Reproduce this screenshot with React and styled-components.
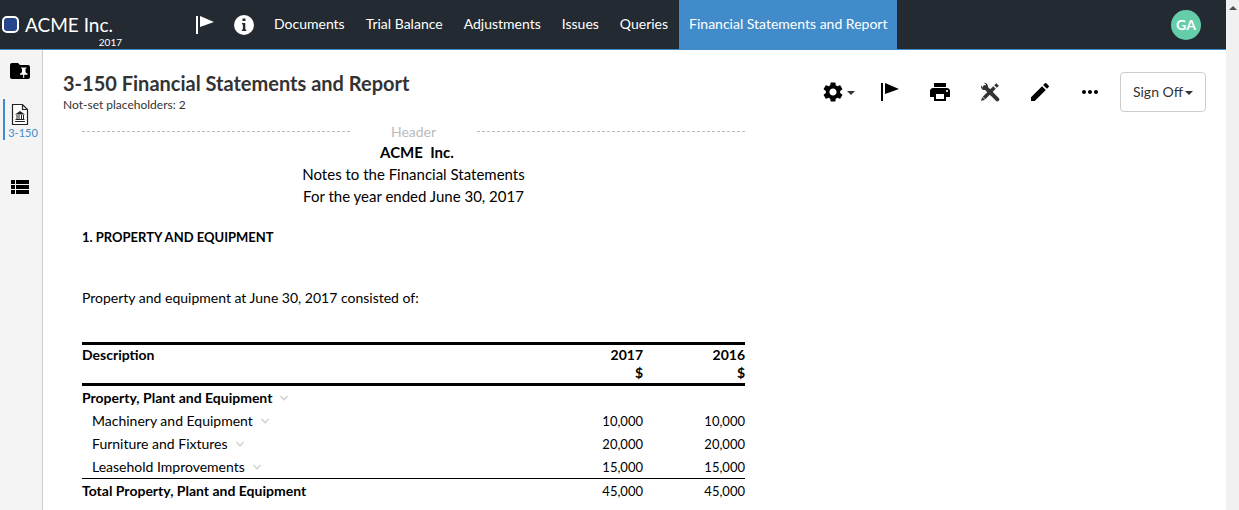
import React from "react";
import styled, { createGlobalStyle } from "styled-components";
import { MdSettings, MdPrint, MdEdit, MdMoreHoriz, MdViewList } from "react-icons/md";

const Global = createGlobalStyle`
  * { box-sizing: border-box; }
  body { margin: 0; background: #fff; color: #333; font-family: Lato, "Liberation Sans", sans-serif; font-size: 14px; }
  button { font: inherit; color: inherit; background: none; border: 0; padding: 0; cursor: pointer; }
  a { color: inherit; text-decoration: none; }
  svg { display: block; flex: none; }
`;

const Page = styled.div`
  display: grid;
  grid-template-columns: minmax(0, 1fr) 13px;
  height: 100vh;
  overflow: hidden;
`;
const Shell = styled.div`
  display: flex;
  flex-direction: column;
  min-width: 0;
`;
const ScrollTrack = styled.div`
  display: flex;
  justify-content: center;
  padding-top: 6px;
  background: #f1f1f1;
`;
const TopBar = styled.header`
  display: flex;
  flex: none;
  height: 50px;
  background: #232a31;
  border-bottom: 1px solid #428bca;
  color: #fff;
`;
const Brand = styled.a`
  display: flex;
  flex-direction: column;
  width: 122px;
  padding: 13px 0 0 2px;
`;
const BrandName = styled.span`
  display: flex;
  align-items: center;
  gap: 6px;
  font-size: 19px;
  line-height: 23px;
`;
const Logo = styled.span`
  width: 17px;
  height: 17px;
  border: 2px solid #fff;
  border-radius: 5px;
  background: #27468b;
`;
const BrandYear = styled.span`
  align-self: flex-end;
  font-size: 10px;
  line-height: 12px;
`;
const TopIcons = styled.div`
  display: flex;
  align-items: center;
  gap: 19px;
  padding-left: 73px;
`;
const NavLinks = styled.nav`
  display: flex;
  gap: 1px;
  padding-left: 10px;
`;
const NavLink = styled.a`
  display: flex;
  align-items: center;
  height: 49px;
  padding: 0 10px 2px;
  white-space: nowrap;
  background: ${(p) => (p.$active ? "#428bca" : "transparent")};
`;
const Avatar = styled.button`
  align-self: center;
  width: 30px;
  height: 30px;
  margin: 0 25px 0 auto;
  border-radius: 50%;
  background: #66cdaa;
  color: #fff;
  font-size: 14px;
  font-weight: 700;
`;
const Body = styled.div`
  display: flex;
  flex: 1;
  min-height: 0;
`;
const SideBar = styled.nav`
  display: flex;
  flex: none;
  flex-direction: column;
  width: 43px;
  padding: 9px 0 0 3px;
  background: #f4f4f4;
  border-right: 1px solid #ccc;
`;
const SideLink = styled.a`
  display: flex;
  flex-direction: column;
  align-items: center;
  padding: 4px 7px 0 0;
  height: ${(p) => (p.$active ? "41px" : "40px")};
  border-left: 2px solid ${(p) => (p.$active ? "#428bca" : "transparent")};
  margin-bottom: ${(p) => (p.$active ? "31px" : "0")};
  color: #000;
`;
const SideLabel = styled.span`
  margin-right: -6px;
  color: #428bca;
  font-size: 11px;
  line-height: 13px;
  white-space: nowrap;
`;
const Main = styled.main`
  flex: 1;
  min-width: 0;
`;
const PageHead = styled.div`
  display: flex;
  justify-content: space-between;
  padding: 22px 20px 0;
`;
const Title = styled.h1`
  margin: 0;
  font-size: 20px;
  line-height: 23px;
  font-weight: 700;
`;
const SubTitle = styled.p`
  margin: 0;
  font-size: 12px;
  line-height: 19px;
`;
const Tools = styled.div`
  display: flex;
  align-items: center;
  height: 40px;
`;
const ToolButton = styled.button`
  display: flex;
  align-items: center;
  justify-content: center;
  width: ${(p) => (p.$wide ? "55px" : "50px")};
  height: 40px;
  gap: 2px;
  color: #000;
`;
const SignOff = styled.button`
  display: flex;
  align-items: center;
  justify-content: center;
  gap: 2px;
  width: 86px;
  height: 40px;
  padding-bottom: 1px;
  margin-left: 5px;
  border: 1px solid #ccc;
  border-radius: 4px;
  color: #333;
  font-size: 14px;
`;
const Caret = styled.span`
  margin-top: 2px;
  border: 4px solid transparent;
  border-top-color: #333;
  border-bottom: 0;
`;
const ScrollArrow = styled.span`
  width: 8px;
  height: 4px;
  border: 4px solid transparent;
  border-top: 0;
  border-bottom-color: #505050;
`;
const Doc = styled.article`
  width: 663px;
  max-width: calc(100% - 58px);
  margin: 7px 0 0 39px;
  color: #000;
`;
const HeaderMark = styled.div`
  display: flex;
  align-items: center;
  gap: 41px;
  height: 20px;
  color: #bbb;
  font-size: 14px;
`;
const Dash = styled.span`
  flex: 1 1 0;
  border-top: 1px dashed #bbb;
`;
const Heading = styled.div`
  text-align: center;
  font-size: 15px;
  line-height: 22px;
  font-weight: ${(p) => (p.$bold ? 700 : 400)};
  white-space: pre;
`;
const NoteTitle = styled.h2`
  margin: 20px 0 0;
  font-size: 13px;
  line-height: 20px;
  font-weight: 700;
`;
const NoteText = styled.p`
  margin: 41px 0 34px;
  font-size: 14px;
  line-height: 20px;
`;
const Table = styled.table`
  width: 100%;
  border-collapse: collapse;
  font-size: 14px;
`;
const HeadCell = styled.th`
  width: ${(p) => p.$width || "auto"};
  height: 41px;
  padding: 1px 0 0;
  border-top: 3px solid #000;
  border-bottom: 3px solid #000;
  line-height: 18px;
  text-align: ${(p) => (p.$num ? "right" : "left")};
  vertical-align: top;
`;
const BodyRow = styled.tr`
  height: 23px;
  border-top: ${(p) => (p.$total ? "1px solid #000" : "0")};
`;
const LabelCell = styled.th`
  padding: 0 0 0 ${(p) => (p.$indent ? "10px" : "0")};
  font-weight: ${(p) => (p.$indent ? 400 : 700)};
  text-align: left;
  line-height: 23px;
`;
const NumCell = styled.td`
  padding: 0;
  font-size: 13px;
  text-align: right;
`;
const RowLabel = styled.span`
  display: flex;
  align-items: center;
  gap: 8px;
`;

const FlagIcon = () => (
  <svg width="20" height="20" viewBox="0 0 20 20" fill="currentColor" aria-hidden="true">
    <path d="M1 1h2v18H1zM5 1l14 6L5 12z" />
  </svg>
);
const InfoIcon = () => (
  <svg width="20" height="20" viewBox="0 0 20 20" aria-hidden="true">
    <circle cx="10" cy="10" r="10" fill="#fff" />
    <path d="M8.500 3.500h3v2.500h-3zM8 8h3.300v6.500h1V16H7.900v-1.500h1V9.500H8z" fill="#232a31" />
  </svg>
);
const FolderPinIcon = () => (
  <svg width="20" height="16" viewBox="0 0 20 16" aria-hidden="true">
    <path d="M2 0h6l2 2h8a2 2 0 0 1 2 2v10a2 2 0 0 1-2 2H2a2 2 0 0 1-2-2V2a2 2 0 0 1 2-2z" />
    <path d="M11 4.500h5.500v1h-1v3.700l2 1.600v1H14.200V15h-1v-3.200H10v-1l2-1.600V5.500h-1z" fill="#fff" />
  </svg>
);
const BankDocIcon = () => (
  <svg width="18" height="23" viewBox="0 0 18 23" fill="none" stroke="#222" aria-hidden="true">
    <path d="M1.500 1.500h10l5 5v15h-15zM11.500 1.500v5h5" fill="#fff" strokeWidth="1.200" />
    <path d="M4 11.500 9 8l5 3.500z" fill="#222" stroke="none" />
    <path d="M6 12v4M8 12v4M10.500 12v4M12.500 12v4M4.500 16.500h9M4 18.500h10" />
  </svg>
);
const ToolsIcon = () => (
  <svg width="20" height="20" viewBox="0 0 20 20" fill="none" stroke="#333" aria-hidden="true">
    <path d="M5 5 17.300 17.300" strokeWidth="4" strokeLinecap="round" />
    <path d="M1 3.500 3.500 6 6 5V2.500L3.800.8C6 .5 8 2 8 4.500 8 7 5.500 8.500 3 8 1.500 7 .7 5 1 3.500z" fill="#333" stroke="none" />
    <path d="M3.500 16.500 15 5" stroke="#fff" strokeWidth="4.600" />
    <path d="M4 16 14.500 5.500" strokeWidth="3.600" />
    <path d="M8 8 12 12" strokeWidth="4" />
    <path d="M15.300 2.200 17.800 4.700" strokeWidth="3" />
    <path d="M1 19 2.200 15 5 17.800z" fill="#333" stroke="none" />
  </svg>
);
const Chevron = () => (
  <svg width="8" height="6" viewBox="0 0 8 6" fill="none" stroke="#ccc" strokeWidth="1.300" aria-hidden="true">
    <path d="M.5 1 4 4.700 7.500 1" />
  </svg>
);

const links = ["Documents", "Trial Balance", "Adjustments", "Issues", "Queries", "Financial Statements and Report"];
const rows = [
  { label: "Property, Plant and Equipment", menu: true },
  { label: "Machinery and Equipment", indent: true, menu: true, values: ["10,000", "10,000"] },
  { label: "Furniture and Fixtures", indent: true, menu: true, values: ["20,000", "20,000"] },
  { label: "Leasehold Improvements", indent: true, menu: true, values: ["15,000", "15,000"] },
  { label: "Total Property, Plant and Equipment", total: true, values: ["45,000", "45,000"] },
];

export default function App() {
  return (
    <>
      <Global />
      <Page>
        <Shell>
          <TopBar>
            <Brand href="#">
              <BrandName><Logo />ACME Inc.</BrandName>
              <BrandYear>2017</BrandYear>
            </Brand>
            <TopIcons>
              <button aria-label="Flag"><FlagIcon /></button>
              <button aria-label="Information"><InfoIcon /></button>
            </TopIcons>
            <NavLinks>
              {links.map((l, i) => (
                <NavLink key={l} href="#" $active={i === 5}>{l}</NavLink>
              ))}
            </NavLinks>
            <Avatar>GA</Avatar>
          </TopBar>
          <Body>
            <SideBar>
              <SideLink href="#" aria-label="Pinned folder"><FolderPinIcon /></SideLink>
              <SideLink href="#" $active><BankDocIcon /><SideLabel>3-150</SideLabel></SideLink>
              <SideLink href="#" aria-label="List"><MdViewList size={24} /></SideLink>
            </SideBar>
            <Main>
              <PageHead>
                <div>
                  <Title>3-150 Financial Statements and Report</Title>
                  <SubTitle>Not-set placeholders: 2</SubTitle>
                </div>
                <Tools>
                  <ToolButton $wide aria-label="Settings"><MdSettings size={24} /><Caret /></ToolButton>
                  <ToolButton aria-label="Flag"><FlagIcon /></ToolButton>
                  <ToolButton aria-label="Print"><MdPrint size={24} /></ToolButton>
                  <ToolButton aria-label="Tools"><ToolsIcon /></ToolButton>
                  <ToolButton aria-label="Edit"><MdEdit size={24} /></ToolButton>
                  <ToolButton aria-label="More"><MdMoreHoriz size={24} /></ToolButton>
                  <SignOff>Sign Off<Caret /></SignOff>
                </Tools>
              </PageHead>
              <Doc>
                <HeaderMark><Dash />Header<Dash /></HeaderMark>
                <Heading $bold>{"  ACME  Inc."}</Heading>
                <Heading>Notes to the Financial Statements</Heading>
                <Heading>For the year ended June 30, 2017</Heading>
                <NoteTitle>1. PROPERTY AND EQUIPMENT</NoteTitle>
                <NoteText>Property and equipment at June 30, 2017 consisted of:</NoteText>
                <Table>
                  <thead>
                    <tr>
                      <HeadCell>Description</HeadCell>
                      <HeadCell $num $width="102px">2017<br />$</HeadCell>
                      <HeadCell $num $width="102px">2016<br />$</HeadCell>
                    </tr>
                  </thead>
                  <tbody>
                    {rows.map((r) => (
                      <BodyRow key={r.label} $total={r.total}>
                        <LabelCell scope="row" $indent={r.indent}>
                          <RowLabel>{r.label}{r.menu && <Chevron />}</RowLabel>
                        </LabelCell>
                        <NumCell>{r.values?.[0]}</NumCell>
                        <NumCell>{r.values?.[1]}</NumCell>
                      </BodyRow>
                    ))}
                  </tbody>
                </Table>
              </Doc>
            </Main>
          </Body>
        </Shell>
        <ScrollTrack><ScrollArrow /></ScrollTrack>
      </Page>
    </>
  );
}
